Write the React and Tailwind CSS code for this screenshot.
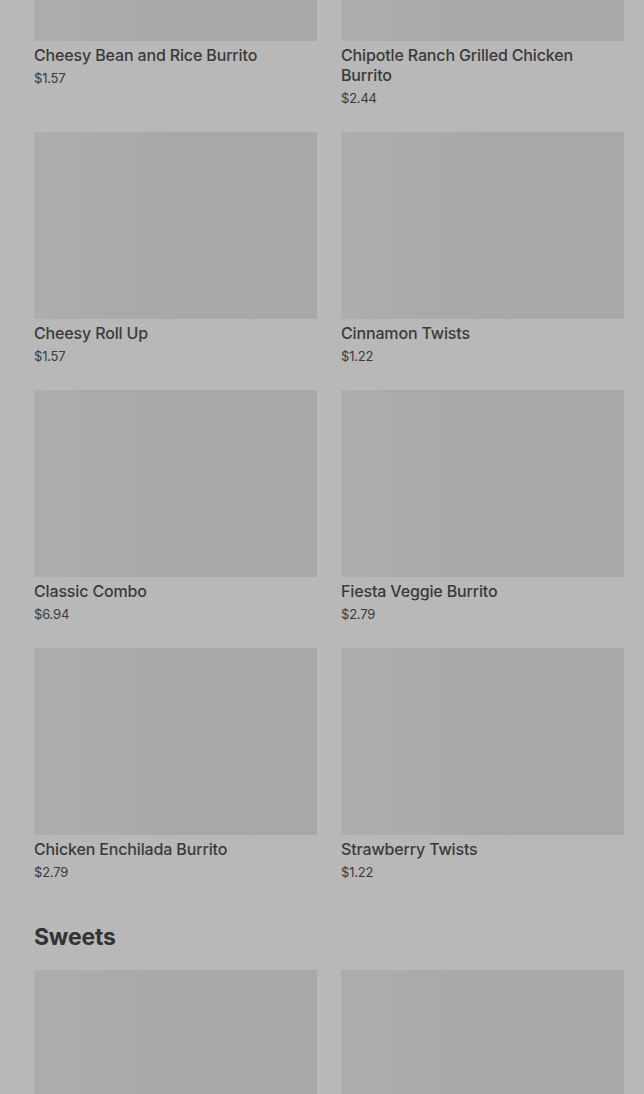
import React from 'react';

const items = [
    { name: 'Cheesy Bean and Rice Burrito', price: '$1.57' },
    { name: 'Chipotle Ranch Grilled Chicken Burrito', price: '$2.44' },
    { name: 'Cheesy Roll Up', price: '$1.57' },
    { name: 'Cinnamon Twists', price: '$1.22' },
    { name: 'Classic Combo', price: '$6.94' },
    { name: 'Fiesta Veggie Burrito', price: '$2.79' },
    { name: 'Chicken Enchilada Burrito', price: '$2.79' },
    { name: 'Strawberry Twists', price: '$1.22' }
];

const Placeholder = () => (
    <div className="h-[187px] w-full bg-gradient-to-r from-[#adadad] via-[#a8a8a8] to-[#a8a8a8]" />
);

const ItemCard = ({ name, price }) => (
    <div className="flex flex-col">
        <Placeholder />
        <div className="mt-1 text-[16px] leading-5 font-medium tracking-[-0.15px] text-[#3a3a3a] pr-6">{name}</div>
        <div className="mt-[3px] text-[13px] leading-5 tracking-[-0.2px] text-[#3a3a3a]">{price}</div>
    </div>
);

const App = () => {
    return (
        <div className="h-[1094px] overflow-hidden bg-[#b8b8b8]" style={{ fontFamily: 'Inter, "Noto Sans", sans-serif' }}>
            <div className="-mt-[146px] pl-[34px] pr-[20px]">
                <div className="grid grid-cols-2 gap-x-6 gap-y-6">
                    {items.map((item) => (
                        <ItemCard key={item.name} {...item} />
                    ))}
                </div>
                <h2 className="mt-[39px] text-[23px] leading-8 font-bold tracking-[-0.2px] text-[#333333]">Sweets</h2>
                <div className="mt-[17px] grid grid-cols-2 gap-x-6">
                    <Placeholder />
                    <Placeholder />
                </div>
            </div>
        </div>
    );
};

export default App;
